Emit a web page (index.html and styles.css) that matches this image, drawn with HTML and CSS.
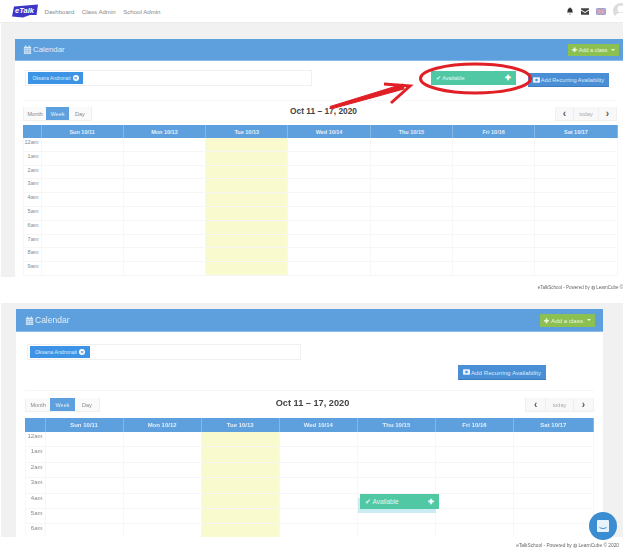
FILE: index.html
```html
<!DOCTYPE html>
<html lang="en">
<head>
<meta charset="utf-8">
<title>Calendar</title>
<link rel="stylesheet" href="styles.css">
</head>
<body>
<div class="page">

<section class="shot shot-a">
  <header class="nav">
    <div class="logo">
      <svg viewBox="0 0 28 14" width="28" height="14"><path d="M3 2.500 L27 0.500 L25.500 11 L19 11 L12 13.500 L1 12.500 Z" fill="#3b36c4"/></svg>
      <span class="logo-text">eTalk</span>
    </div>
    <a class="nav-link">Dashboard</a>
    <a class="nav-link">Class Admin</a>
    <a class="nav-link">School Admin</a>
    <div class="nav-icons">
      <svg viewBox="0 0 10 10" width="8" height="8"><path d="M5 0.500a1 1 0 0 1 1 1c2 .6 2 2.500 2 4l1 1.500H1l1-1.500c0-1.500 0-3.400 2-4a1 1 0 0 1 1-1zM4 8.500h2a1 1 0 0 1-2 0z" fill="#333"/></svg>
      <svg viewBox="0 0 10 8" width="8" height="7"><path d="M0 0h10v1.500L5 4.500 0 1.500zM0 2.800l5 3 5-3V8H0z" fill="#444"/></svg>
      <svg viewBox="0 0 10 7" width="10" height="7"><rect width="10" height="7" fill="#8f9fd6"/><path d="M0 0l10 7M10 0L0 7" stroke="#e9c6cc" stroke-width="1"/><path d="M5 0v7M0 3.500h10" stroke="#d8a0ac" stroke-width="1.500"/></svg>
      <span class="avatar"><svg viewBox="0 0 16 16" width="16" height="16"><circle cx="8" cy="6" r="3.500" fill="#fff"/><path d="M1.500 16c0-5 3-6 6.500-6s6.500 1 6.500 6z" fill="#fff"/></svg></span>
    </div>
  </header>
  <div class="stage">
    <div class="panel">
      <div class="panel-head">
        <svg class="cal-icon" viewBox="0 0 10 10"><path d="M1 2h8v8H1z" fill="#dbe9f7"/><path d="M1 4h8M1 6h8M1 8h8M3.500 4v6M6.500 4v6" stroke="#7db1e3" stroke-width=".6"/><path d="M3 .5v2M7 .5v2" stroke="#dbe9f7" stroke-width="1.200"/></svg>
        <span class="panel-title">Calendar</span>
        <button class="add-class"><b>✚</b> Add a class <i class="caret"></i></button>
      </div>
      <div class="panel-body">
        <div class="filter-row">
          <div class="picker"><span class="tag">Oksana Andronati <i class="tag-x">×</i></span></div>
          <button class="recurring"><svg viewBox="0 0 10 8" width="7" height="6"><rect width="10" height="8" rx="1" fill="#e7f0fa"/><circle cx="5" cy="4" r="1.800" fill="#4a8fd6"/></svg> Add Recurring Availability</button>
        </div>
        <div class="toolbar">
          <div class="btn-group"><span>Month</span><span class="on">Week</span><span>Day</span></div>
          <h2 class="range">Oct 11 – 17, 2020</h2>
          <div class="btn-group nav-group"><span class="chev">‹</span><span class="dim">today</span><span class="chev">›</span></div>
        </div>
        <div class="grid">
          <div class="hd"></div><div class="hd">Sun 10/11</div><div class="hd">Mon 10/12</div><div class="hd">Tue 10/13</div><div class="hd">Wed 10/14</div><div class="hd">Thu 10/15</div><div class="hd">Fri 10/16</div><div class="hd">Sat 10/17</div>
          <div class="t">12am</div><div></div><div></div><div class="today"></div><div></div><div></div><div></div><div></div>
          <div class="t">1am</div><div></div><div></div><div class="today"></div><div></div><div></div><div></div><div></div>
          <div class="t">2am</div><div></div><div></div><div class="today"></div><div></div><div></div><div></div><div></div>
          <div class="t">3am</div><div></div><div></div><div class="today"></div><div></div><div></div><div></div><div></div>
          <div class="t">4am</div><div></div><div></div><div class="today"></div><div></div><div></div><div></div><div></div>
          <div class="t">5am</div><div></div><div></div><div class="today"></div><div></div><div></div><div></div><div></div>
          <div class="t">6am</div><div></div><div></div><div class="today"></div><div></div><div></div><div></div><div></div>
          <div class="t">7am</div><div></div><div></div><div class="today"></div><div></div><div></div><div></div><div></div>
          <div class="t">8am</div><div></div><div></div><div class="today"></div><div></div><div></div><div></div><div></div>
          <div class="t">9am</div><div></div><div></div><div class="today"></div><div></div><div></div><div></div><div></div>
        </div>
      </div>
    </div>
  </div>
  <footer class="foot">eTalkSchool - Powered by ◍ LearnCube ©</footer>
  <div class="event event-a"><span>✔ Available</span><b>✚</b></div>
  <svg class="markup" viewBox="0 0 623 120" width="623" height="120">
    <ellipse cx="475.500" cy="78.500" rx="55" ry="14.500" fill="none" stroke="#e01f26" stroke-width="3"/>
    <path d="M330 106.500 L331 109 L404 89 L403 84 Z" fill="#e01f26" stroke="#e01f26" stroke-width="1"/>
    <path d="M384 84 L410 86 L391 103" stroke="#e01f26" stroke-width="3" fill="none"/>
  </svg>
</section>

<section class="shot shot-b">
  <div class="stage">
    <div class="panel">
      <div class="panel-head">
        <svg class="cal-icon" viewBox="0 0 10 10"><path d="M1 2h8v8H1z" fill="#dbe9f7"/><path d="M1 4h8M1 6h8M1 8h8M3.500 4v6M6.500 4v6" stroke="#7db1e3" stroke-width=".6"/><path d="M3 .5v2M7 .5v2" stroke="#dbe9f7" stroke-width="1.200"/></svg>
        <span class="panel-title">Calendar</span>
        <button class="add-class"><b>✚</b> Add a class <i class="caret"></i></button>
      </div>
      <div class="panel-body">
        <div class="filter-row">
          <div class="picker"><span class="tag">Oksana Andronati <i class="tag-x">×</i></span></div>
          <button class="recurring"><svg viewBox="0 0 10 8" width="7" height="6"><rect width="10" height="8" rx="1" fill="#e7f0fa"/><circle cx="5" cy="4" r="1.800" fill="#4a8fd6"/></svg> Add Recurring Availability</button>
        </div>
        <div class="toolbar">
          <div class="btn-group"><span>Month</span><span class="on">Week</span><span>Day</span></div>
          <h2 class="range">Oct 11 – 17, 2020</h2>
          <div class="btn-group nav-group"><span class="chev">‹</span><span class="dim">today</span><span class="chev">›</span></div>
        </div>
        <div class="grid">
          <div class="hd"></div><div class="hd">Sun 10/11</div><div class="hd">Mon 10/12</div><div class="hd">Tue 10/13</div><div class="hd">Wed 10/14</div><div class="hd">Thu 10/15</div><div class="hd">Fri 10/16</div><div class="hd">Sat 10/17</div>
          <div class="t">12am</div><div></div><div></div><div class="today"></div><div></div><div></div><div></div><div></div>
          <div class="t">1am</div><div></div><div></div><div class="today"></div><div></div><div></div><div></div><div></div>
          <div class="t">2am</div><div></div><div></div><div class="today"></div><div></div><div></div><div></div><div></div>
          <div class="t">3am</div><div></div><div></div><div class="today"></div><div></div><div></div><div></div><div></div>
          <div class="t">4am</div><div></div><div></div><div class="today"></div><div></div><div></div><div></div><div></div>
          <div class="t">5am</div><div></div><div></div><div class="today"></div><div></div><div></div><div></div><div></div>
          <div class="t">6am</div><div></div><div></div><div class="today"></div><div></div><div></div><div></div><div></div>
        </div>
      </div>
    </div>
  </div>
  <footer class="foot">eTalkSchool - Powered by ◍ LearnCube © 2020</footer>
  <div class="ghost"></div>
  <div class="event event-b"><span>✔ Available</span><b>✚</b></div>
  <div class="chat"><svg viewBox="0 0 14 14" width="14" height="14"><path d="M1 2a1 1 0 0 1 1-1h10a1 1 0 0 1 1 1v10a1 1 0 0 1-1 1H2a1 1 0 0 1-1-1z" fill="#e8f2fa"/><path d="M3.500 8.500c2 1.300 5 1.300 7 0" stroke="#3a8dd0" stroke-width="1" fill="none"/></svg></div>
</section>

</div>
</body>
</html>
```

FILE: styles.css
```css
* { box-sizing: border-box; }
html, body { margin: 0; padding: 0; background: #fff; }
.page {
  width: 623px;
  height: 549px;
  overflow: hidden;
  font-family: "Liberation Sans", Arial, sans-serif;
  filter: blur(0.5px);
}
.shot { position: relative; }
.shot-a { height: 303px; }
.shot-b { height: 246px; }

/* top nav */
.nav {
  height: 23px;
  display: flex;
  align-items: center;
  padding-left: 11px;
  gap: 7.500px;
  background: #fff;
  border-bottom: 1px solid #ececec;
  font-size: 6.100px;
  color: #8a8a8a;
}
.logo { position: relative; width: 28px; height: 14px; margin-right: -2px; }
.logo svg { display: block; }
.logo-text {
  position: absolute;
  left: 4px;
  top: 2px;
  font: italic bold 7.500px "Liberation Sans", sans-serif;
  color: #fff;
}
.nav-icons { margin-left: auto; display: flex; align-items: center; gap: 7px; }
.avatar {
  width: 16px;
  height: 16px;
  border-radius: 50%;
  background: #dcdcdc;
  margin-right: -6px;
  overflow: hidden;
  display: block;
}
.avatar svg { display: block; }

/* gray stage + panel */
.stage { margin-left: 1px; background: #f1f1f1; }
.shot-a .stage { height: 254px; padding: 16px 0 0 14px; }
.shot-b .stage { height: 234px; padding: 6px 0 0 15px; }
.panel { background: #fff; overflow: hidden; }
.shot-a .panel { width: 608px; height: 238px; }
.shot-b .panel { width: 587px; height: 228px; }

.panel-head {
  display: flex;
  align-items: center;
  background: #5da0dd;
  border-bottom: 1px solid #8dbce8;
  color: #e3eef9;
}
.shot-a .panel-head { height: 22px; padding: 0 4px 0 8px; font-size: 7.800px; }
.shot-b .panel-head { height: 23px; padding: 0 8px 0 9px; font-size: 8.500px; }
.cal-icon { width: 9px; height: 9px; margin-right: 1px; }
.add-class {
  margin-left: auto;
  border: 0;
  padding: 0;
  background: #8cc152;
  color: #eef6e4;
  font: 5.500px "Liberation Sans", sans-serif;
  display: flex;
  align-items: center;
  justify-content: center;
  gap: 2px;
}
.shot-a .add-class { width: 51px; height: 12px; }
.shot-b .add-class { width: 55px; height: 13px; font-size: 6.200px; }
.caret {
  width: 0;
  height: 0;
  margin-left: 2px;
  border: 2px solid transparent;
  border-top-color: #eef6e4;
  border-bottom: 0;
}

.shot-a .panel-body { padding: 9px 6px 0 8px; }
.shot-b .panel-body { padding: 12px 9px 0 9px; }

.filter-row { position: relative; border-bottom: 1px solid #f6f6f6; }
.shot-a .filter-row { display: flex; justify-content: space-between; height: 31px; padding: 0 8px 0 2px; }
.shot-b .filter-row { display: flex; flex-direction: column; height: 47px; padding: 0 48px 0 2px; }
.picker {
  border: 1px solid #f0f0f0;
  padding: 1px 2px;
  display: flex;
  align-items: center;
}
.shot-a .picker { width: 287px; height: 16px; }
.shot-b .picker { width: 274px; height: 16px; }
.tag {
  background: #3d94e6;
  color: #dcebfa;
  display: flex;
  align-items: center;
  justify-content: center;
  gap: 2px;
}
.shot-a .tag { width: 55px; height: 12px; font-size: 4.800px; }
.shot-b .tag { width: 60px; height: 12px; font-size: 5.300px; }
.tag-x {
  width: 6px;
  height: 6px;
  border-radius: 50%;
  background: #fff;
  color: #3d94e6;
  font: bold 6px/6px "Liberation Sans", sans-serif;
  text-align: center;
}
.recurring {
  border: 0;
  padding: 0;
  background: #4a8fd6;
  border-bottom: 1px solid #3f7cbc;
  color: #dbe9f7;
  font: 6px "Liberation Sans", sans-serif;
  white-space: nowrap;
  display: flex;
  align-items: center;
  justify-content: center;
  gap: 1px;
}
.shot-a .recurring { width: 81px; height: 14px; margin-top: 3px; font-size: 5.600px; }
.shot-b .recurring { width: 88px; height: 15px; margin: 5px 0 0 auto; font-size: 6.200px; }

.toolbar { display: flex; justify-content: space-between; height: 14px; }
.shot-a .toolbar { margin: 6px 0 4px; }
.shot-b .toolbar { margin: 7px 0 6px; }
.btn-group {
  display: flex;
  height: 14px;
  background: #fafafa;
  border: 1px solid #f0f0f0;
  border-top: 0;
  font-size: 5.500px;
  color: #888;
}
.btn-group span { display: flex; align-items: center; justify-content: center; flex: 1; }
.shot-a .btn-group { width: 69px; }
.shot-b .btn-group { width: 75px; }
.btn-group .on { background: #5da0dd; color: #e4effa; }
.nav-group { background: #f8f8f8; }
.shot-a .nav-group { width: 62px; }
.shot-b .nav-group { width: 69px; }
.chev { font-size: 10px; color: #555; font-weight: bold; }
.dim { color: #aaa; border-left: 1px solid #eee; border-right: 1px solid #eee; flex: 1.400 !important; }
.range { margin: 0; font-weight: bold; color: #444; line-height: 10px; }
.shot-a .range { font-size: 8.400px; margin-top: -1px; }
.shot-b .range { font-size: 9.200px; }

.grid { display: grid; }
.shot-a .grid { grid-template-columns: 18.500px repeat(7, 82.300px); grid-template-rows: 13px repeat(10, 13.800px); }
.shot-b .grid { grid-template-columns: 20.500px repeat(6, 78.100px) 79.500px; grid-template-rows: 14px repeat(7, 15.400px); }
.grid > div {
  border-right: 1px solid #f7f7f7;
  background-image: linear-gradient(#f6f6f6, #f6f6f6);
  background-size: 100% 1px;
  background-position: 0 100%;
  background-repeat: no-repeat;
}
.grid > .hd {
  background: #5da0dd;
  border-right: 1px solid #86b8e6;
  color: #e4effa;
  font-weight: bold;
  font-size: 5.500px;
  display: flex;
  align-items: center;
  justify-content: center;
}
.shot-b .grid > .hd { font-size: 6px; }
.grid > .t {
  font-size: 5.600px;
  color: #888;
  text-align: right;
  padding-right: 2px;
  border-left: 1px solid #f7f7f7;
  padding-top: 1px;
}
.shot-b .grid > .t { font-size: 6px; }
.grid > .today { background-color: #f9fbcf; }

/* overlays */
.event {
  position: absolute;
  background: #50c8a4;
  color: #e6f7f1;
  font-size: 5.500px;
  display: flex;
  align-items: center;
  justify-content: space-between;
  padding: 0 5px;
  z-index: 2;
}
.event b { font-size: 7px; color: #fff; }
.event-a { left: 431px; top: 71px; width: 85px; height: 14px; }
.event-b { left: 360px; top: 191px; width: 79px; height: 15px; font-size: 6.500px; }
.ghost {
  position: absolute;
  left: 358px;
  top: 195px;
  width: 78px;
  height: 15px;
  background: #c9edf2;
  z-index: 1;
}
.markup { position: absolute; left: 0; top: 0; z-index: 3; }
.foot {
  position: absolute;
  left: 0;
  text-align: right;
  color: #666;
  white-space: nowrap;
}
.shot-a .foot { top: 285px; right: 0; font-size: 4.500px; }
.shot-b .foot { top: 240px; right: 4px; font-size: 4.800px; }
.chat {
  position: absolute;
  left: 589px;
  top: 209px;
  width: 28px;
  height: 28px;
  border-radius: 50%;
  background: #3a8dd0;
  display: flex;
  align-items: center;
  justify-content: center;
  z-index: 3;
}
.chat svg { display: block; }
```
